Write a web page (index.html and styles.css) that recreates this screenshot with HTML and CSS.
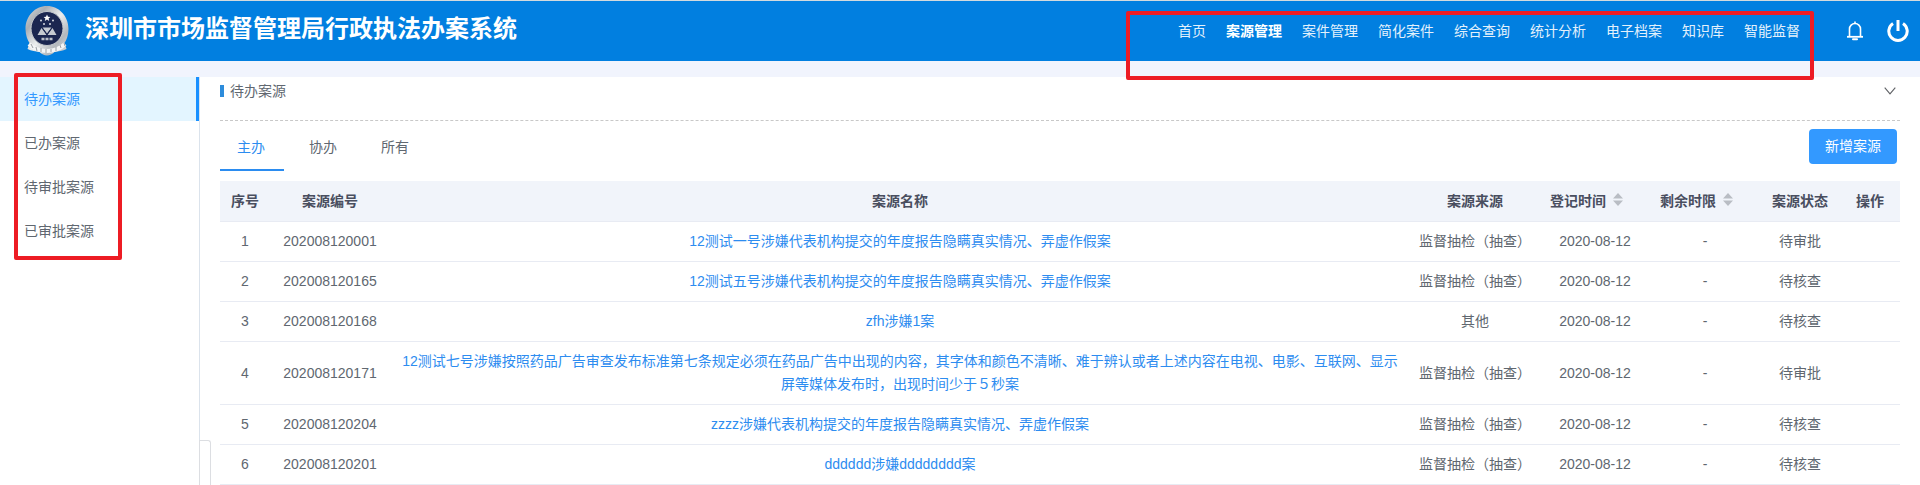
FILE: index.html
```html
<!DOCTYPE html>
<html lang="zh-CN">
<head>
<meta charset="utf-8">
<title>深圳市市场监督管理局行政执法办案系统</title>
<link rel="stylesheet" href="styles.css">
</head>
<body>
<header class="topbar">
  <svg class="logo" viewBox="0 0 44 50" aria-hidden="true">
    <defs>
      <linearGradient id="silver" x1="0" y1="0" x2="1" y2="1">
        <stop offset="0" stop-color="#d9dcdf"/><stop offset=".25" stop-color="#a9aeb4"/>
        <stop offset=".5" stop-color="#eceeef"/><stop offset=".75" stop-color="#b4b8bd"/><stop offset="1" stop-color="#dfe1e4"/>
      </linearGradient>
    </defs>
    <path d="M22 0C34 0 43.500 10 43.500 23c0 6-2 11-4 14l2 6c-4 2-8 2-12 3-2 2-5 3.500-7.500 3.500S16.500 48 14.500 46c-4-1-8-1-12-3l2-6C2.500 34 .5 29 .5 23 .5 10 10 0 22 0z" fill="url(#silver)"/>
    <path d="M4 38c4 4 10 7 18 7s14-3 18-7" stroke="#f4f5f6" stroke-width="4" fill="none"/>
    <path d="M6 38l2 4m3-1l1 4m4-3v4m5-3v4m5-4v3m5-5v4m4-6l1 3m3-5l1 3" stroke="#9ba0a6" stroke-width="1"/>
    <ellipse cx="22" cy="22.500" rx="16" ry="17" fill="#1b2650" stroke="#c3c7cc" stroke-width="1"/>
    <path d="M22 8.500l1 2.200 2.400.2-1.800 1.600.6 2.400-2.200-1.300-2.200 1.300.6-2.400-1.800-1.600 2.400-.2z" fill="#fff"/>
    <g fill="#d8dbe2"><circle cx="16" cy="14.500" r="1"/><circle cx="28" cy="14.500" r="1"/><circle cx="19" cy="18" r="1"/><circle cx="25" cy="18" r="1"/></g>
    <path d="M17.500 21.500h9L22 27.500zM16.500 22l5 7h-9zM27.500 22l4 7h-9z" fill="#c6cad1"/>
    <path d="M17 21.500l5 7 5-7" stroke="#1b2650" stroke-width=".8" fill="none"/>
    <path d="M16.500 33h3m1 0h3m1 0h3" stroke="#b9bec8" stroke-width="2.500"/>
  </svg>
  <h1 class="brand">深圳市市场监督管理局行政执法办案系统</h1>
  <nav class="nav">
    <a href="#">首页</a>
    <a href="#" class="nav-active">案源管理</a>
    <a href="#">案件管理</a>
    <a href="#">简化案件</a>
    <a href="#">综合查询</a>
    <a href="#">统计分析</a>
    <a href="#">电子档案</a>
    <a href="#">知识库</a>
    <a href="#">智能监督</a>
  </nav>
  <div class="tools">
    <button type="button" aria-label="通知">
      <svg width="18" height="20" viewBox="0 0 18 20" fill="none" stroke="#fff" stroke-width="1.600">
        <path d="M3.500 15.500V8a5.500 5.500 0 0 1 11 0v7.500M9 2.500V.5"/>
        <path d="M1 15.800h16" stroke-width="1.800"/>
        <path d="M7 18.300h4" stroke-width="2" stroke-linecap="round"/>
      </svg>
    </button>
    <button type="button" aria-label="退出">
      <svg width="22" height="22" viewBox="0 0 22 22" fill="none" stroke="#fff" stroke-width="3">
        <path d="M6 3.500a9.200 9.200 0 1 0 10 0"/><path d="M11 0v11"/>
      </svg>
    </button>
  </div>
</header>
<div class="layout">
  <aside class="sidebar">
    <a href="#" class="side-item side-active">待办案源</a>
    <a href="#" class="side-item">已办案源</a>
    <a href="#" class="side-item">待审批案源</a>
    <a href="#" class="side-item">已审批案源</a>
    <button class="collapse" type="button" aria-label="收起菜单"></button>
  </aside>
  <main class="content">
    <div class="panel-head">
      <h2 class="panel-title">待办案源</h2>
      <button class="fold" type="button" aria-label="展开">
        <svg width="12" height="8" viewBox="0 0 12 8" fill="none" stroke="#606266" stroke-width="1.100"><path d="M.7.700L6 6.800 11.300.7"/></svg>
      </button>
    </div>
    <div class="toolbar">
      <div class="tabs">
        <button class="tab tab-active" type="button">主办</button>
        <button class="tab" type="button">协办</button>
        <button class="tab" type="button">所有</button>
      </div>
      <button class="primary" type="button">新增案源</button>
    </div>
    <table class="grid">
      <colgroup>
        <col class="col-index"><col class="col-code"><col><col class="col-source">
        <col class="col-time"><col class="col-time"><col class="col-status"><col class="col-action">
      </colgroup>
      <thead>
        <tr>
          <th>序号</th><th>案源编号</th><th>案源名称</th><th>案源来源</th>
          <th>登记时间<button class="sort" type="button" aria-label="按登记时间排序"><svg width="10" height="13" viewBox="0 0 10 13" fill="#b9bdc4"><path d="M5 0l5 5.500H0zM0 7.500h10L5 13z"/></svg></button></th>
          <th>剩余时限<button class="sort" type="button" aria-label="按剩余时限排序"><svg width="10" height="13" viewBox="0 0 10 13" fill="#b9bdc4"><path d="M5 0l5 5.500H0zM0 7.500h10L5 13z"/></svg></button></th>
          <th>案源状态</th><th>操作</th>
        </tr>
      </thead>
      <tbody>
        <tr><td>1</td><td>202008120001</td><td><a href="#">12测试一号涉嫌代表机构提交的年度报告隐瞒真实情况、弄虚作假案</a></td><td>监督抽检（抽查）</td><td>2020-08-12</td><td>-</td><td>待审批</td><td></td></tr>
        <tr><td>2</td><td>202008120165</td><td><a href="#">12测试五号涉嫌代表机构提交的年度报告隐瞒真实情况、弄虚作假案</a></td><td>监督抽检（抽查）</td><td>2020-08-12</td><td>-</td><td>待核查</td><td></td></tr>
        <tr><td>3</td><td>202008120168</td><td><a href="#">zfh涉嫌1案</a></td><td>其他</td><td>2020-08-12</td><td>-</td><td>待核查</td><td></td></tr>
        <tr><td>4</td><td>202008120171</td><td><a href="#">12测试七号涉嫌按照药品广告审查发布标准第七条规定必须在药品广告中出现的内容，其字体和颜色不清晰、难于辨认或者上述内容在电视、电影、互联网、显示屏等媒体发布时，出现时间少于５秒案</a></td><td>监督抽检（抽查）</td><td>2020-08-12</td><td>-</td><td>待审批</td><td></td></tr>
        <tr><td>5</td><td>202008120204</td><td><a href="#">zzzz涉嫌代表机构提交的年度报告隐瞒真实情况、弄虚作假案</a></td><td>监督抽检（抽查）</td><td>2020-08-12</td><td>-</td><td>待核查</td><td></td></tr>
        <tr><td>6</td><td>202008120201</td><td><a href="#">dddddd涉嫌dddddddd案</a></td><td>监督抽检（抽查）</td><td>2020-08-12</td><td>-</td><td>待核查</td><td></td></tr>
      </tbody>
    </table>
  </main>
</div>
</body>
</html>
```
FILE: styles.css
```css
*,
*::before,
*::after {
  box-sizing: border-box;
}

body {
  margin: 0;
  min-height: 100vh;
  display: flex;
  flex-direction: column;
  background: #f1f4fd;
  border-top: 1px solid #d3dade;
  color: #606770;
  font: 14px/23px "Liberation Sans", "Noto Sans CJK SC", sans-serif;
}

a {
  color: inherit;
  text-decoration: none;
}

button {
  padding: 0;
  border: 0;
  background: none;
  color: inherit;
  font: inherit;
  cursor: pointer;
}

svg {
  display: block;
}

/* Top bar */
.topbar {
  display: flex;
  align-items: center;
  height: 60px;
  padding: 0 11px 0 25px;
  background: #017fe0;
  color: #fff;
}

.logo {
  width: 44px;
  height: 50px;
}

.brand {
  margin: 0 auto 4px 16px;
  font-size: 24px;
  line-height: 32px;
  white-space: nowrap;
}

.nav {
  position: relative;
  display: flex;
  align-items: center;
  align-self: stretch;
  gap: 20px;
  white-space: nowrap;
  color: #e3f1fc;
}

.nav::after {
  content: "";
  position: absolute;
  inset: 10px -14px -19px -52px;
  border: 4px solid #ed1c24;
  border-radius: 2px;
  pointer-events: none;
}

.nav-active {
  color: #fff;
  font-weight: bold;
}

.tools {
  display: flex;
  align-items: center;
  gap: 23px;
  margin-left: 46px;
}

/* Page body */
.layout {
  flex: 1;
  display: flex;
  margin-top: 16px;
  background: #fff;
}

.sidebar {
  position: relative;
  flex: none;
  width: 200px;
  border-right: 1px solid #dbe3ec;
}

.sidebar::after {
  content: "";
  position: absolute;
  top: -4px;
  left: 14px;
  width: 108px;
  height: 187px;
  border: 4px solid #ed1c24;
  border-radius: 2px;
  pointer-events: none;
}

.side-item {
  display: block;
  padding-left: 24px;
  line-height: 44px;
}

.side-active {
  border-right: 3px solid #1890ff;
  background: #e3f5ff;
  color: #3399ff;
}

.collapse {
  position: absolute;
  left: 100%;
  bottom: 0;
  width: 12px;
  height: 45px;
  border: 1px solid #dcdee2;
  border-bottom: 0;
  border-top-right-radius: 3px;
  background: #fff;
}

.content {
  flex: 1;
  min-width: 0;
  padding: 0 20px;
}

.panel-head {
  display: flex;
  justify-content: space-between;
  height: 44px;
  padding: 2px 4px 0 0;
  border-bottom: 1px dashed #c8c8c8;
}

.panel-title {
  display: flex;
  align-items: center;
  gap: 6px;
  height: 24px;
  margin: 0;
  font-size: 14px;
  font-weight: normal;
}

.panel-title::before {
  content: "";
  width: 4px;
  height: 12px;
  background: #2d8cdb;
}

.fold {
  height: 24px;
}

.toolbar {
  display: flex;
  justify-content: space-between;
  align-items: flex-start;
  padding: 8px 3px 10px 0;
}

.tabs {
  display: flex;
  gap: 8px;
}

.tab {
  width: 64px;
  height: 42px;
  padding: 0 2px 4px 0;
  border-bottom: 2px solid transparent;
}

.tab-active {
  border-color: #2b8cf0;
  color: #2b8cf0;
}

.primary {
  width: 88px;
  height: 35px;
  border-radius: 4px;
  background: #3399ff;
  color: #fff;
}

/* Case table */
.grid {
  width: 100%;
  table-layout: fixed;
  border-collapse: separate;
  border-spacing: 0;
  text-align: center;
}

.col-index { width: 50px; }
.col-code { width: 120px; }
.col-source { width: 130px; }
.col-time { width: 110px; }
.col-status { width: 80px; }
.col-action { width: 60px; }

.grid th,
.grid td {
  padding: 8px 0;
  border-bottom: 1px solid #e8ebf3;
}

.grid th {
  height: 41px;
  background: #f1f4fa;
  color: #494e5f;
  white-space: nowrap;
}

.grid td:nth-child(3) {
  padding: 8px 10px;
  color: #2d8cf0;
}

.sort {
  width: 34px;
  padding-left: 7px;
}
```
